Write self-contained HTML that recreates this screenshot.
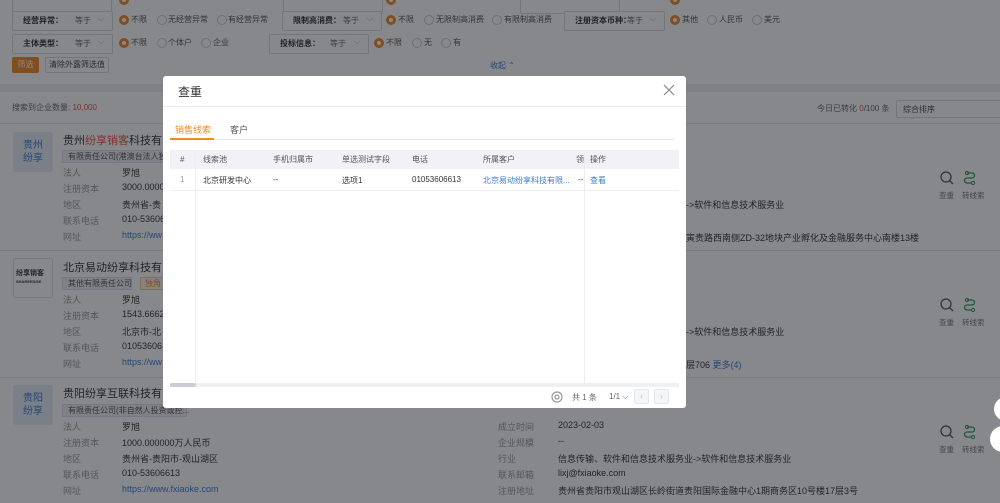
<!DOCTYPE html>
<html><head><meta charset="utf-8"><style>
*{margin:0;padding:0;box-sizing:border-box}
body{width:1000px;height:503px;overflow:hidden;position:relative;background:#fff;font-family:"Liberation Sans","Noto Sans CJK SC",sans-serif;font-size:9px;color:#333}
.a{position:absolute;white-space:nowrap}
.sel{position:absolute;height:20px;border:1px solid #d8d8d8;border-radius:2px;background:#fff;font-size:8px}
.sel b{position:absolute;left:10px;top:3px;font-weight:bold;color:#333}
.sel i{position:absolute;top:3px;font-style:normal;color:#666}
.sel em{position:absolute;right:8px;top:2px;font-style:normal;color:#aaa}
.r{position:absolute;width:10px;height:10px;border-radius:50%;border:1px solid #ccc}
.r.on{border:3px solid #f08a24}
.rl{position:absolute;font-size:8px;color:#555}
.lbl{color:#999}
.ov{position:absolute;left:0;top:0;width:1000px;height:503px;background:rgba(15,17,25,.5)}
.modal{position:absolute;left:163px;top:76px;width:523px;height:332px;background:#fff;border-radius:3px}
.th{position:absolute;top:0;height:19px;line-height:19px;font-size:8px;color:#555}
</style></head><body>
<div style="position:absolute;left:0;top:0;width:1000px;height:78px;background:#fff"></div>
<div class="sel" style="left:12px;top:-6px;width:100px"></div>
<div class="r on" style="left:119px;top:-5px"></div>
<div class="sel" style="left:283px;top:-6px;width:100px"></div>
<div class="sel" style="left:520px;top:-6px;width:100px"></div>
<div class="r on" style="left:386px;top:-5px"></div><div class="r on" style="left:670px;top:-5px"></div>

<div class="sel" style="left:12px;top:11px;width:101px"><b>经营异常：</b><i style="left:62px">等于</i><em>⌵</em></div>
<div class="r on" style="left:119px;top:15px"></div><span class="a rl" style="left:131px;top:14px">不限</span>
<div class="r" style="left:157px;top:15px"></div><span class="a rl" style="left:168px;top:14px">无经营异常</span>
<div class="r" style="left:217px;top:15px"></div><span class="a rl" style="left:228px;top:14px">有经营异常</span>
<div class="sel" style="left:282px;top:11px;width:100px"><b>限制高消费：</b><i style="left:60px">等于</i><em>⌵</em></div>
<div class="r on" style="left:386px;top:15px"></div><span class="a rl" style="left:398px;top:14px">不限</span>
<div class="r" style="left:424px;top:15px"></div><span class="a rl" style="left:436px;top:14px">无限制高消费</span>
<div class="r" style="left:492px;top:15px"></div><span class="a rl" style="left:504px;top:14px">有限制高消费</span>
<div class="sel" style="left:564px;top:11px;width:101px"><b>注册资本币种：</b><i style="left:62px">等于</i><em>⌵</em></div>
<div class="r on" style="left:670px;top:15px"></div><span class="a rl" style="left:682px;top:14px">其他</span>
<div class="r" style="left:707px;top:15px"></div><span class="a rl" style="left:719px;top:14px">人民币</span>
<div class="r" style="left:752px;top:15px"></div><span class="a rl" style="left:764px;top:14px">美元</span>

<div class="sel" style="left:12px;top:34px;width:101px"><b>主体类型：</b><i style="left:62px">等于</i><em>⌵</em></div>
<div class="r on" style="left:119px;top:38px"></div><span class="a rl" style="left:131px;top:37px">不限</span>
<div class="r" style="left:157px;top:38px"></div><span class="a rl" style="left:168px;top:37px">个体户</span>
<div class="r" style="left:201px;top:38px"></div><span class="a rl" style="left:213px;top:37px">企业</span>
<div class="sel" style="left:269px;top:34px;width:100px"><b>投标信息：</b><i style="left:60px">等于</i><em>⌵</em></div>
<div class="r on" style="left:374px;top:38px"></div><span class="a rl" style="left:386px;top:37px">不限</span>
<div class="r" style="left:412px;top:38px"></div><span class="a rl" style="left:424px;top:37px">无</span>
<div class="r" style="left:441px;top:38px"></div><span class="a rl" style="left:453px;top:37px">有</span>

<div class="a" style="left:12px;top:57px;width:27px;height:16px;background:#f08a24;border-radius:2px;color:#fff;font-size:8px;text-align:center;line-height:16px">筛选</div>
<div class="a" style="left:45px;top:57px;width:64px;height:16px;border:1px solid #d8d8d8;border-radius:2px;font-size:8px;text-align:center;line-height:14px;color:#444">清除外露筛选值</div>
<span class="a" style="left:490px;top:60px;font-size:8px;color:#3a7bd5">收起 ⌃</span>

<div style="position:absolute;left:0;top:84px;width:1000px;height:8px;background:#eef0f3"></div>
<span class="a" style="left:12px;top:102px;font-size:8px;color:#666">搜索到企业数量: <span style="color:#e5523c">10,000</span></span>
<span class="a" style="left:817px;top:103px;font-size:8px;color:#666">今日已转化 <span style="color:#e5523c">0</span>/100 条</span>
<div class="sel" style="left:896px;top:100px;width:110px;height:18px"><i style="left:6px;top:3px;color:#444">综合排序</i></div>
<div style="position:absolute;left:0;top:123px;width:1000px;height:1px;background:#e5e5e5"></div>

<div class="a" style="left:13px;top:132px;width:40px;height:40px;background:#e4ecf6;border-radius:3px;color:#3a7bd5;font-size:10px;text-align:center;line-height:13px;padding-top:7px;white-space:normal">贵州<br>纷享</div>
<span class="a" style="left:63px;top:132px;font-size:11px;color:#333">贵州<span style="color:#e5523c">纷享销客</span>科技有限</span>
<div class="a" style="left:62px;top:150px;width:100px;height:13px;background:#eef0f3;border:1px solid #dde;font-size:8px;color:#555;padding-left:5px;line-height:11px">有限责任公司(港澳台法人独</div>
<span class="a lbl" style="left:63px;top:166px;font-size:9px">法人</span><span class="a" style="left:122px;top:166px">罗旭</span>
<span class="a lbl" style="left:63px;top:182px">注册资本</span><span class="a" style="left:122px;top:182px">3000.00000</span>
<span class="a lbl" style="left:63px;top:198px">地区</span><span class="a" style="left:122px;top:198px">贵州省-贵</span>
<span class="a lbl" style="left:63px;top:214px">联系电话</span><span class="a" style="left:122px;top:214px">010-53606</span>
<span class="a lbl" style="left:63px;top:230px">网址</span><span class="a" style="left:122px;top:230px;color:#3a7bd5">https://ww</span>
<span class="a" style="left:686px;top:198px">->软件和信息技术服务业</span>
<span class="a" style="left:686px;top:231px">寅贵路西南侧ZD-32地块产业孵化及金融服务中心南楼13楼</span>
<div style="position:absolute;left:0;top:250px;width:1000px;height:1px;background:#e5e5e5"></div>

<div class="a" style="left:13px;top:258px;width:40px;height:40px;background:#fff;border:1px solid #ddd;border-radius:3px;font-size:7px;font-weight:bold;color:#333;padding:11px 2px;line-height:8px">纷享销客<br><span style="font-size:4px">SHAREEDGE</span></div>
<span class="a" style="left:63px;top:259px;font-size:11px">北京易动纷享科技有限</span>
<div class="a" style="left:62px;top:277px;width:70px;height:13px;background:#eef0f3;border:1px solid #dde;font-size:8px;color:#555;padding-left:5px;line-height:11px">其他有限责任公司</div>
<div class="a" style="left:140px;top:277px;width:25px;height:13px;background:#fdf3e7;border:1px solid #f5c89a;font-size:8px;color:#f08a24;padding-left:4px;line-height:11px">独角</div>
<span class="a lbl" style="left:63px;top:293px">法人</span><span class="a" style="left:122px;top:293px">罗旭</span>
<span class="a lbl" style="left:63px;top:309px">注册资本</span><span class="a" style="left:122px;top:309px">1543.6662</span>
<span class="a lbl" style="left:63px;top:325px">地区</span><span class="a" style="left:122px;top:325px">北京市-北</span>
<span class="a lbl" style="left:63px;top:341px">联系电话</span><span class="a" style="left:122px;top:341px">01053606</span>
<span class="a lbl" style="left:63px;top:357px">网址</span><span class="a" style="left:122px;top:357px;color:#3a7bd5">https://ww</span>
<span class="a" style="left:686px;top:325px">->软件和信息技术服务业</span>
<span class="a" style="left:686px;top:358px">层706 <span style="color:#3a7bd5">更多(4)</span></span>
<div style="position:absolute;left:0;top:377px;width:1000px;height:1px;background:#e5e5e5"></div>

<div class="a" style="left:13px;top:385px;width:40px;height:40px;background:#e4ecf6;border-radius:3px;color:#3a7bd5;font-size:10px;text-align:center;line-height:13px;padding-top:7px;white-space:normal">贵阳<br>纷享</div>
<span class="a" style="left:63px;top:385px;font-size:11px">贵阳纷享互联科技有限</span>
<div class="a" style="left:62px;top:404px;width:125px;height:13px;background:#eef0f3;border:1px solid #dde;font-size:8px;color:#555;padding-left:5px;line-height:11px">有限责任公司(非自然人投资或控...</div>
<span class="a lbl" style="left:63px;top:420px">法人</span><span class="a" style="left:122px;top:420px">罗旭</span>
<span class="a lbl" style="left:63px;top:436px">注册资本</span><span class="a" style="left:122px;top:436px">1000.000000万人民币</span>
<span class="a lbl" style="left:63px;top:452px">地区</span><span class="a" style="left:122px;top:452px">贵州省-贵阳市-观山湖区</span>
<span class="a lbl" style="left:63px;top:468px">联系电话</span><span class="a" style="left:122px;top:468px">010-53606613</span>
<span class="a lbl" style="left:63px;top:484px">网址</span><span class="a" style="left:122px;top:484px;color:#3a7bd5">https://www.fxiaoke.com</span>
<span class="a lbl" style="left:498px;top:420px">成立时间</span><span class="a" style="left:558px;top:420px">2023-02-03</span>
<span class="a lbl" style="left:498px;top:436px">企业规模</span><span class="a" style="left:558px;top:436px">--</span>
<span class="a lbl" style="left:498px;top:452px">行业</span><span class="a" style="left:558px;top:452px">信息传输、软件和信息技术服务业->软件和信息技术服务业</span>
<span class="a lbl" style="left:498px;top:468px">联系邮箱</span><span class="a" style="left:558px;top:468px">lixj@fxiaoke.com</span>
<span class="a lbl" style="left:498px;top:484px">注册地址</span><span class="a" style="left:558px;top:484px">贵州省贵阳市观山湖区长岭街道贵阳国际金融中心1期商务区10号楼17层3号</span>

<svg class="a" style="left:938px;top:170px" width="60" height="35"><circle cx="8" cy="7" r="5" fill="none" stroke="#555" stroke-width="1.3"/><line x1="12" y1="11" x2="15" y2="14" stroke="#555" stroke-width="1.3"/><path d="M29 3h5a2.5 2.5 0 0 1 0 5h-5a2.5 2.5 0 0 0 0 5h5" fill="none" stroke="#2e9d5b" stroke-width="1.3"/><circle cx="29" cy="3" r="1.6" fill="none" stroke="#2e9d5b"/><circle cx="35" cy="13" r="1.6" fill="none" stroke="#2e9d5b"/><text x="1" y="28" font-size="7.5" fill="#777" font-family="Noto Sans CJK SC">查重</text><text x="24" y="28" font-size="7.5" fill="#777" font-family="Noto Sans CJK SC">转线索</text></svg>
<svg class="a" style="left:938px;top:297px" width="60" height="35"><circle cx="8" cy="7" r="5" fill="none" stroke="#555" stroke-width="1.3"/><line x1="12" y1="11" x2="15" y2="14" stroke="#555" stroke-width="1.3"/><path d="M29 3h5a2.5 2.5 0 0 1 0 5h-5a2.5 2.5 0 0 0 0 5h5" fill="none" stroke="#2e9d5b" stroke-width="1.3"/><circle cx="29" cy="3" r="1.6" fill="none" stroke="#2e9d5b"/><circle cx="35" cy="13" r="1.6" fill="none" stroke="#2e9d5b"/><text x="1" y="28" font-size="7.5" fill="#777" font-family="Noto Sans CJK SC">查重</text><text x="24" y="28" font-size="7.5" fill="#777" font-family="Noto Sans CJK SC">转线索</text></svg>
<svg class="a" style="left:938px;top:424px" width="60" height="35"><circle cx="8" cy="7" r="5" fill="none" stroke="#555" stroke-width="1.3"/><line x1="12" y1="11" x2="15" y2="14" stroke="#555" stroke-width="1.3"/><path d="M29 3h5a2.5 2.5 0 0 1 0 5h-5a2.5 2.5 0 0 0 0 5h5" fill="none" stroke="#2e9d5b" stroke-width="1.3"/><circle cx="29" cy="3" r="1.6" fill="none" stroke="#2e9d5b"/><circle cx="35" cy="13" r="1.6" fill="none" stroke="#2e9d5b"/><text x="1" y="28" font-size="7.5" fill="#777" font-family="Noto Sans CJK SC">查重</text><text x="24" y="28" font-size="7.5" fill="#777" font-family="Noto Sans CJK SC">转线索</text></svg>

<div class="ov"></div>
<div class="a" style="left:994px;top:397px;width:24px;height:24px;border-radius:50%;background:#fff"></div>
<div class="a" style="left:990px;top:426px;width:26px;height:26px;border-radius:50%;background:#fff"></div>

<div class="modal">
  <span class="a" style="left:15px;top:7px;font-size:12px;color:#333">查重</span>
  <svg class="a" style="left:500px;top:8px" width="12" height="12"><path d="M1 1L11 11M11 1L1 11" stroke="#888" stroke-width="1.2"/></svg>
  <div class="a" style="left:0;top:30px;width:523px;height:1px;background:#eceef2"></div>
  <span class="a" style="left:12px;top:47px;font-size:9px;color:#f08a24">销售线索</span>
  <span class="a" style="left:67px;top:47px;font-size:9px;color:#555">客户</span>
  <div class="a" style="left:7px;top:63px;width:505px;height:1px;background:#e6e8ee"></div>
  <div class="a" style="left:7px;top:62px;width:44px;height:2px;background:#f08a24"></div>
  <div class="a" style="left:7px;top:74px;width:509px;height:19px;background:#f0f2f5"></div>
  <div class="a" style="left:7px;top:74px;width:509px;height:20px">
    <span class="th" style="left:10px">#</span>
    <span class="th" style="left:33px">线索池</span>
    <span class="th" style="left:103px">手机归属市</span>
    <span class="th" style="left:172px">单选测试字段</span>
    <span class="th" style="left:242px">电话</span>
    <span class="th" style="left:313px">所属客户</span>
    <span class="th" style="left:406px">领</span>
    <span class="th" style="left:420px">操作</span>
  </div>
  <div class="a" style="left:7px;top:93px;width:509px;height:21px;font-size:8px;color:#333">
    <span class="a" style="left:10px;top:6px;color:#999">1</span>
    <span class="a" style="left:33px;top:6px">北京研发中心</span>
    <span class="a" style="left:103px;top:6px">--</span>
    <span class="a" style="left:172px;top:6px">选项1</span>
    <span class="a" style="left:242px;top:6px">01053606613</span>
    <span class="a" style="left:313px;top:6px;color:#3a7bd5">北京易动纷享科技有限...</span>
    <span class="a" style="left:408px;top:6px">--</span>
    <span class="a" style="left:420px;top:6px;color:#3a7bd5">查看</span>
  </div>
  <div class="a" style="left:7px;top:114px;width:509px;height:1px;background:#eceef2"></div>
  <div class="a" style="left:32px;top:74px;width:1px;height:233px;background:#eceef2"></div>
  <div class="a" style="left:421px;top:74px;width:1px;height:233px;background:#eceef2"></div>
  <div class="a" style="left:7px;top:307px;width:509px;height:4px;background:#eef0f3"></div>
  <div class="a" style="left:7px;top:307px;width:26px;height:4px;background:#c9ccd3;border-radius:2px"></div>
  <svg class="a" style="left:388px;top:315px" width="12" height="12"><circle cx="6" cy="6" r="5" fill="none" stroke="#999" stroke-width="1.2"/><circle cx="6" cy="6" r="2" fill="none" stroke="#999" stroke-width="1.2"/></svg>
  <span class="a" style="left:409px;top:316px;font-size:8px;color:#666">共 1 条</span>
  <span class="a" style="left:446px;top:316px;font-size:8px;color:#666">1/1 ⌵</span>
  <div class="a" style="left:471px;top:313px;width:15px;height:15px;border:1px solid #e4e7ed;background:#f4f6f9;border-radius:2px;color:#bbb;font-size:8px;text-align:center;line-height:13px">‹</div>
  <div class="a" style="left:491px;top:313px;width:15px;height:15px;border:1px solid #e4e7ed;background:#f4f6f9;border-radius:2px;color:#bbb;font-size:8px;text-align:center;line-height:13px">›</div>
</div>
</body></html>
